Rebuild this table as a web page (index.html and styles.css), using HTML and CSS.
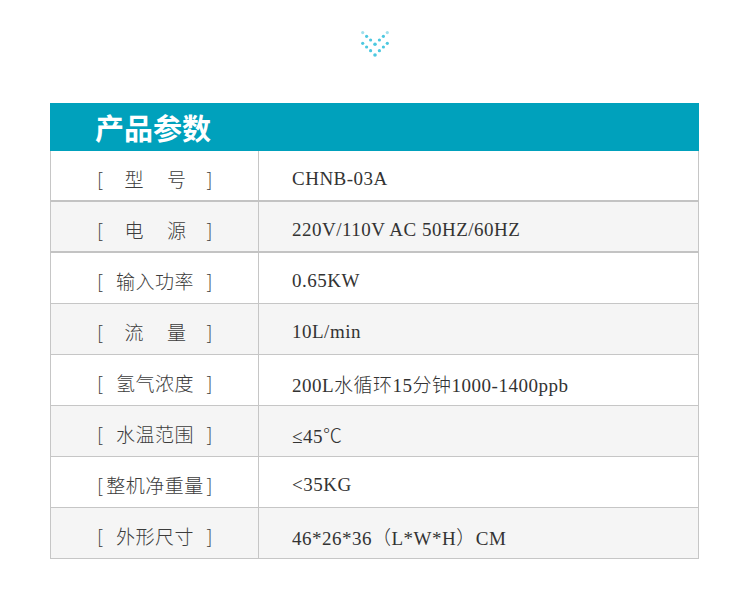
FILE: index.html
```html
<!DOCTYPE html>
<html lang="zh">
<head>
<meta charset="utf-8">
<title>产品参数</title>
<link rel="stylesheet" href="styles.css">
</head>
<body>
<div class="top">
  <svg class="chev" width="30" height="30" viewBox="0 0 30 30">
    <g fill="#9fe0ec">
      <circle cx="2.7" cy="3.6" r="1.6"/><circle cx="27.3" cy="3.6" r="1.6"/>
    </g>
    <g fill="#4cc8e0">
      <circle cx="2.7" cy="14.3" r="1.6"/><circle cx="27.3" cy="14.3" r="1.6"/>
      <circle cx="6.6" cy="7.3" r="1.6"/><circle cx="23.4" cy="7.3" r="1.6"/>
      <circle cx="10.6" cy="11" r="1.6"/><circle cx="19.4" cy="11" r="1.6"/>
      <circle cx="15" cy="15.3" r="1.8"/>
      <circle cx="6.6" cy="18" r="1.6"/><circle cx="23.4" cy="18" r="1.6"/>
      <circle cx="10.6" cy="21.7" r="1.6"/><circle cx="19.4" cy="21.7" r="1.6"/>
      <circle cx="15" cy="26" r="1.8"/>
    </g>
  </svg>
</div>
<section class="spec">
  <h1 class="spec-head">产品参数</h1>
  <div class="row thick white">
    <div class="key"><span class="lbl"><span>[</span><span class="two"><span>型</span><span>号</span></span><span>]</span></span></div>
    <div class="val">CHNB-03A</div>
  </div>
  <div class="row thick gray">
    <div class="key"><span class="lbl"><span>[</span><span class="two"><span>电</span><span>源</span></span><span>]</span></span></div>
    <div class="val">220V/110V AC 50HZ/60HZ</div>
  </div>
  <div class="row white">
    <div class="key"><span class="lbl"><span>[</span><span>输入功率</span><span>]</span></span></div>
    <div class="val">0.65KW</div>
  </div>
  <div class="row gray">
    <div class="key"><span class="lbl"><span>[</span><span class="two"><span>流</span><span>量</span></span><span>]</span></span></div>
    <div class="val">10L/min</div>
  </div>
  <div class="row white">
    <div class="key"><span class="lbl"><span>[</span><span>氢气浓度</span><span>]</span></span></div>
    <div class="val">200L水循环15分钟1000-1400ppb</div>
  </div>
  <div class="row gray">
    <div class="key"><span class="lbl"><span>[</span><span>水温范围</span><span>]</span></span></div>
    <div class="val">≤45℃</div>
  </div>
  <div class="row white">
    <div class="key"><span class="lbl"><span>[</span><span>整机净重量</span><span>]</span></span></div>
    <div class="val">&lt;35KG</div>
  </div>
  <div class="row gray last">
    <div class="key"><span class="lbl"><span>[</span><span>外形尺寸</span><span>]</span></span></div>
    <div class="val">46*26*36（L*W*H）CM</div>
  </div>
</section>
</body>
</html>
```
FILE: styles.css
```css
html, body {
  margin: 0;
  padding: 0;
  background: #ffffff;
}
body {
  font-family: "Liberation Serif", "Noto Sans CJK SC", serif;
  color: #333333;
}
.top {
  height: 103px;
  box-sizing: border-box;
  padding-top: 29px;
  display: flex;
  justify-content: center;
  align-items: flex-start;
}
.chev {
  display: block;
}
.spec {
  width: 649px;
  margin-left: 50px;
}
.spec-head {
  margin: 0;
  height: 48px;
  background: #00a1bc;
  color: #ffffff;
  font-family: "Noto Sans CJK SC", sans-serif;
  font-weight: 700;
  font-size: 29px;
  line-height: 48px;
  padding-left: 45px;
  letter-spacing: 0;
}
.row {
  display: grid;
  grid-template-columns: 208px 1fr;
  height: 51px;
  box-sizing: border-box;
  border-left: 1px solid #c6c6c6;
  border-right: 1px solid #c6c6c6;
  border-bottom: 1px solid #c6c6c6;
  font-size: 19px;
  letter-spacing: 0.5px;
}
.row.thick {
  border-bottom: 2px solid #c3c3c3;
}
.white { background: #ffffff; }
.gray { background: #f5f5f5; }
.key {
  border-right: 1px solid #c6c6c6;
  display: flex;
  align-items: center;
  justify-content: center;
  padding-top: 5px;
  padding-left: 1px;
  box-sizing: border-box;
  color: #3c3c3c;
  font-family: "Noto Sans CJK SC", sans-serif;
  font-weight: 300;
}
.lbl {
  display: flex;
  justify-content: space-between;
  width: 116px;
}
.two {
  display: flex;
  gap: 23px;
  padding-left: 11px;
  padding-right: 10px;
}
.val {
  display: flex;
  align-items: center;
  padding-left: 33px;
  padding-top: 6px;
  box-sizing: border-box;
  white-space: nowrap;
  font-weight: 300;
  color: #333333;
}
```
